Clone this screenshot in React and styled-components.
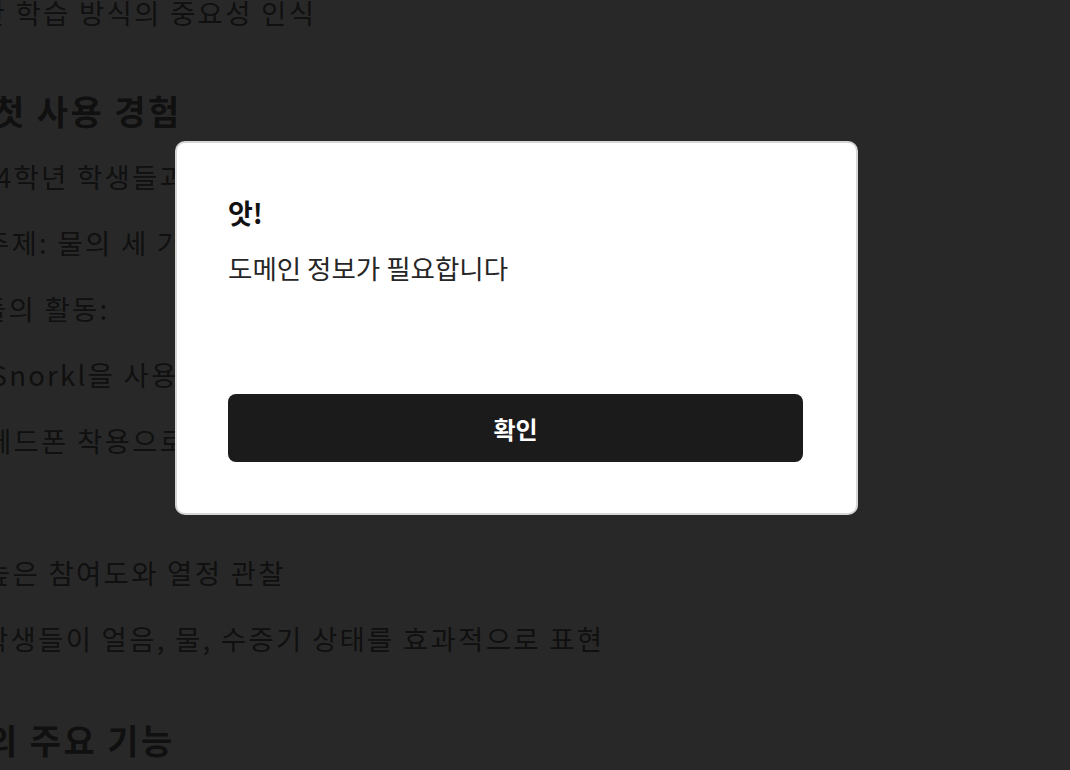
import React from 'react';
import styled, { createGlobalStyle } from 'styled-components';

const GlobalStyle = createGlobalStyle`
  html, body {
    margin: 0;
    padding: 0;
    background: #ffffff;
  }
  body {
    font-family: "Noto Sans CJK KR", "Noto Sans", sans-serif;
    overflow: hidden;
  }
`;

const Page = styled.div`
  width: 1070px;
  height: 770px;
  overflow: hidden;
  background: #ffffff;
  color: #666666;
`;

const Doc = styled.article`
  margin-top: -21px;
  display: flex;
  flex-direction: column;
`;

const Line = styled.p`
  margin: 0 0 0 ${(p) => p.$shift}px;
  height: 66px;
  display: flex;
  align-items: center;
  font-size: 27.5px;
  letter-spacing: 2.25px;
  white-space: nowrap;
`;

const Heading = styled.h2`
  margin: ${(p) => p.$gap}px 0 0 ${(p) => p.$shift}px;
  height: 66px;
  display: flex;
  align-items: center;
  font-size: 34px;
  font-weight: 700;
  letter-spacing: 2.4px;
  white-space: nowrap;
`;

const Spacer = styled.div`
  height: 66px;
`;

const Overlay = styled.div`
  position: fixed;
  inset: 0;
  background: rgba(0, 0, 0, 0.843);
  display: flex;
  justify-content: center;
  align-items: flex-start;
  padding: 141px 37px 0 0;
  box-sizing: border-box;
`;

const Dialog = styled.div`
  width: 683px;
  box-sizing: border-box;
  background: #ffffff;
  border: 2px solid #d6d6d6;
  border-radius: 10px;
  padding: 52px 53px 51px 51px;
  display: flex;
  flex-direction: column;
`;

const Title = styled.h3`
  margin: 0;
  font-size: 27px;
  font-weight: 700;
  line-height: 36px;
  color: #111111;
`;

const Message = styled.p`
  margin: 19px 0 0;
  font-size: 26.5px;
  line-height: 36px;
  color: #262626;
`;

const ConfirmButton = styled.button`
  margin-top: 108px;
  height: 68px;
  border: 0;
  border-radius: 8px;
  background: #1b1b1b;
  color: #ffffff;
  font-family: "Noto Sans CJK KR", "Noto Sans", sans-serif;
  font-size: 24px;
  font-weight: 700;
  cursor: pointer;
`;

export default function App() {
  return (
    <>
      <GlobalStyle />
      <Page>
        <Doc>
          <Line $shift={-20.5}>한 학습 방식의 중요성 인식</Line>
          <Heading $gap={32} $shift={-7}>첫 사용 경험</Heading>
          <Line $shift={-4}>4학년 학생들과 함께 수업 진행</Line>
          <Line $shift={-16}>주제: 물의 세 가지 상태</Line>
          <Line $shift={-19}>들의 활동:</Line>
          <Line $shift={-9.5}>Snorkl을 사용하여 설명 녹음</Line>
          <Line $shift={-14}>헤드폰 착용으로 집중</Line>
          <Spacer />
          <Line $shift={-15}>높은 참여도와 열정 관찰</Line>
          <Line $shift={-17}>학생들이 얼음, 물, 수증기 상태를 효과적으로 표현</Line>
          <Heading $gap={35} $shift={-14}>의 주요 기능</Heading>
        </Doc>
      </Page>
      <Overlay>
        <Dialog role="dialog" aria-modal="true">
          <Title>앗!</Title>
          <Message>도메인 정보가 필요합니다</Message>
          <ConfirmButton type="button">확인</ConfirmButton>
        </Dialog>
      </Overlay>
    </>
  );
}
